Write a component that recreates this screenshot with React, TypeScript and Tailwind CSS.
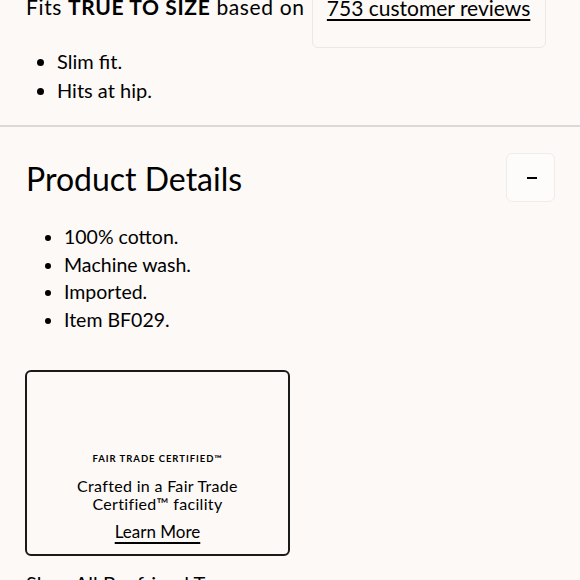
import React from 'react';

const fitNotes = ['Slim fit.', 'Hits at hip.'];
const details = ['100% cotton.', 'Machine wash.', 'Imported.', 'Item BF029.'];

export default function App() {
    return (
        <div
            className="w-[580px] h-[580px] overflow-hidden bg-[#fcf9f7] text-black"
            style={{ fontFamily: 'Lato, "Noto Sans", sans-serif' }}
        >
            {/* Fit section */}
            <div className="relative px-[26px]">
                <div className="flex items-start h-[49px] -mt-[1px]">
                    <p className="text-[21px] leading-[24px] tracking-[0.03em] -mt-[4px] whitespace-nowrap">
                        Fits <span className="font-bold">TRUE TO SIZE</span> based on
                    </p>
                    <div className="ml-[7px] w-[234px] h-[60px] -mt-[11px] border border-[#ebe8e6] rounded-[6px] flex justify-center">
                        <a className="text-[21px] leading-[24px] mt-[7px] underline underline-offset-[3px] decoration-[1.5px]">
                            753 customer reviews
                        </a>
                    </div>
                </div>
                <ul className="pl-[31px] list-disc text-[20px] leading-[29px] mt-[-1px]">
                    {fitNotes.map((n) => (
                        <li key={n}>{n}</li>
                    ))}
                </ul>
            </div>

            <div className="mt-[20px] h-[2px] bg-[#dcdad8]" />

            {/* Product details */}
            <div className="px-[26px]">
                <div className="flex items-center justify-between mt-[26px]">
                    <h2 className="text-[32px] leading-[40px] font-normal mt-[2px]">Product Details</h2>
                    <button className="w-[49px] h-[49px] border border-[#efedeb] bg-[#fdfcfb] rounded-[6px] flex items-center justify-center -mr-[1px]">
                        <span className="block w-[10px] h-[2px] bg-black ml-[2px]" />
                    </button>
                </div>
                <ul className="pl-[38px] list-disc text-[19.5px] leading-[27.7px] mt-[21px]">
                    {details.map((d) => (
                        <li key={d}>{d}</li>
                    ))}
                </ul>

                <div className="mt-[36px] -ml-[1px] w-[265px] h-[186px] border-2 border-[#1a1a1a] rounded-[6px] flex flex-col items-center justify-end pb-[12px] text-center">
                    <p className="text-[9.5px] font-bold tracking-[0.1em]">FAIR TRADE CERTIFIED™</p>
                    <p className="mt-[11px] text-[16px] leading-[18px] tracking-[0.02em]">
                        Crafted in a Fair Trade
                        <br />
                        Certified™ facility
                    </p>
                    <a className="mt-[9px] text-[17px] leading-[20px] underline underline-offset-[4px] decoration-[1.5px]">
                        Learn More
                    </a>
                </div>

                <p className="mt-[15px] text-[20px] leading-[24px] whitespace-nowrap">
                    Shop All Boyfriend Tees
                </p>
            </div>
        </div>
    );
}
